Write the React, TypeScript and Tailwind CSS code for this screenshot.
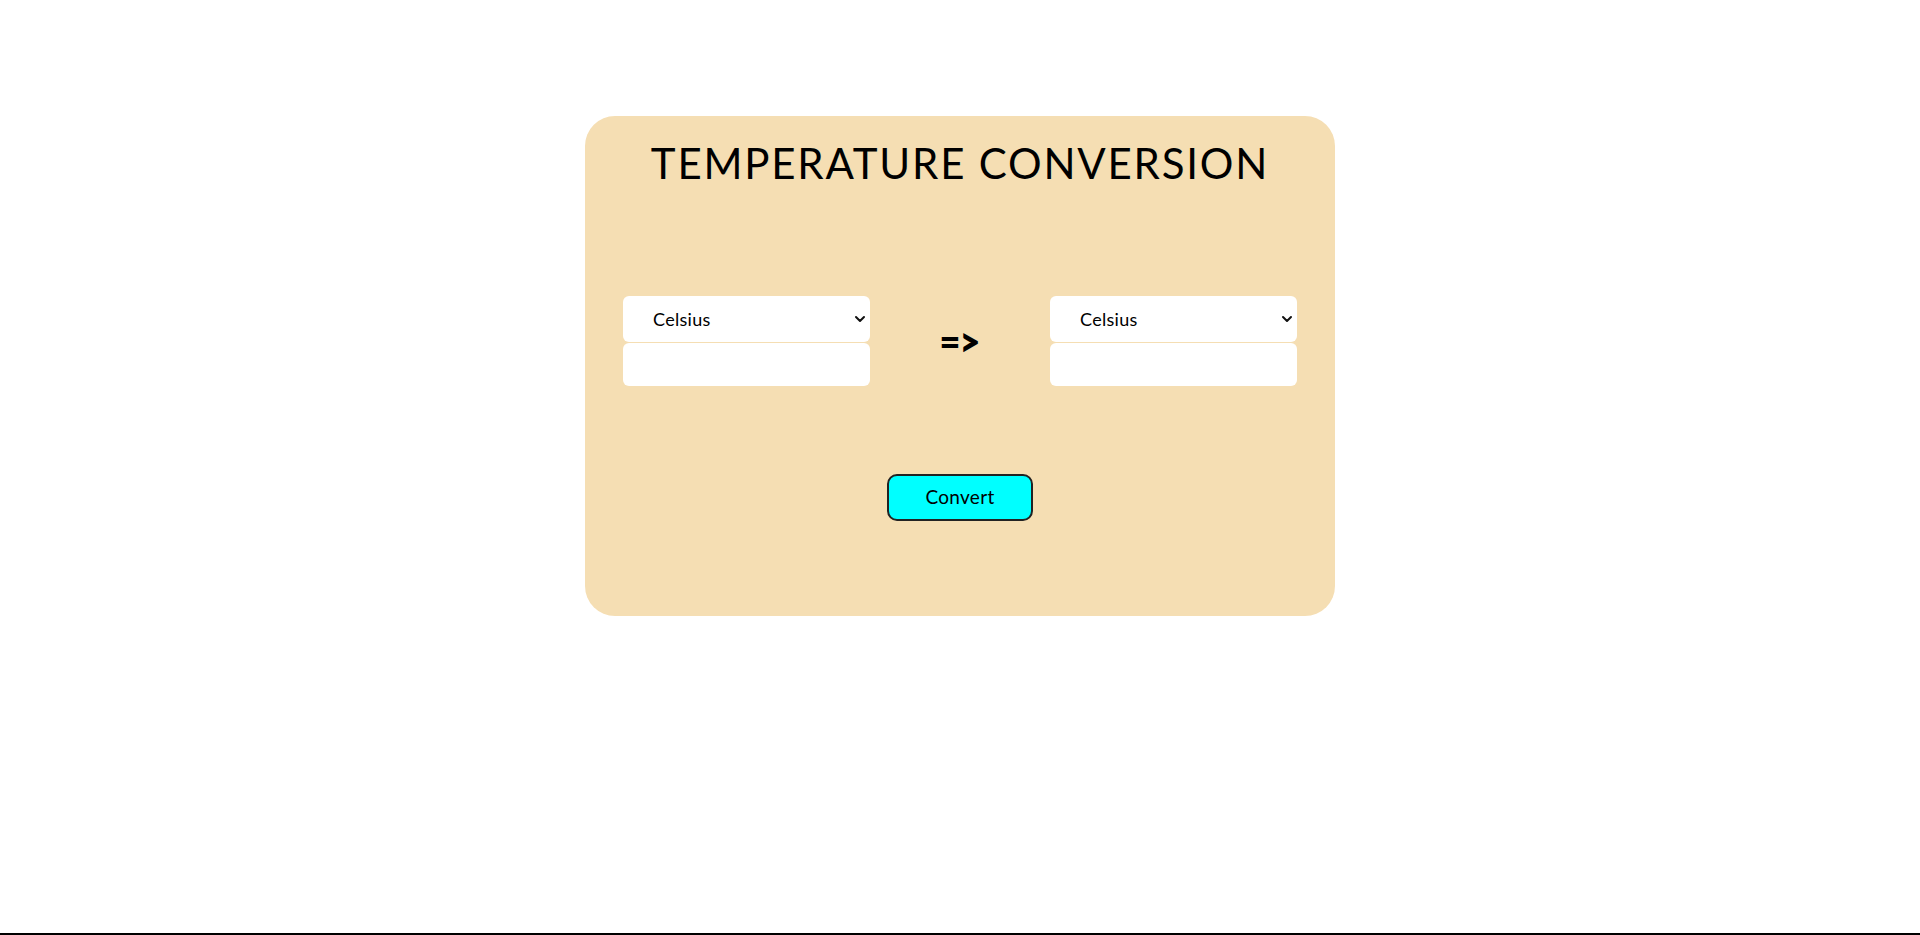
import React from "react";

function Chevron() {
  return (
    <svg
      className="pointer-events-none absolute right-[4px] top-[17px]"
      width="12"
      height="12"
      viewBox="0 0 12 12"
      fill="none"
    >
      <path d="M2 4 L6 8 L10 4" stroke="#111" strokeWidth="2" strokeLinecap="round" strokeLinejoin="round" />
    </svg>
  );
}

function Side() {
  return (
    <div className="flex w-[247px] flex-col gap-[1px]">
      <div className="relative">
        <select
          defaultValue="Celsius"
          className="h-[46px] w-full appearance-none rounded-[6px] border-0 bg-white pl-[30px] text-[18px] tracking-[0.3px] text-black outline-none"
        >
          <option>Celsius</option>
          <option>Fahrenheit</option>
          <option>Kelvin</option>
        </select>
        <Chevron />
      </div>
      <input className="h-[43px] w-full rounded-[6px] border-0 bg-white px-3 text-[17px] outline-none" />
    </div>
  );
}

export default function App() {
  return (
    <div
      className="flex h-[935px] flex-col bg-white"
      style={{ fontFamily: "Lato, 'Noto Sans', sans-serif" }}
    >
      <div className="flex flex-1 justify-center pt-[116px]">
        <div className="flex h-[500px] w-[750px] flex-col items-center rounded-[30px] bg-[#F5DEB3]">
          <h1 className="mt-[17px] text-[42px] font-normal leading-[60px] tracking-[1.8px] text-black">
            TEMPERATURE CONVERSION
          </h1>
          <div className="mt-[103px] flex w-full items-center justify-between px-[38px]">
            <Side />
            <div className="flex items-center text-[36px] font-extrabold leading-none text-black">
              <span>=</span>
              <span className="-ml-[1px] scale-y-110">&gt;</span>
            </div>
            <Side />
          </div>
          <button className="mt-[88px] h-[47px] w-[146px] rounded-[10px] border-2 border-[#222] bg-[#00FFFF] text-[19px] tracking-[0.3px] text-black">
            Convert
          </button>
        </div>
      </div>
      <div className="h-[2px] w-full bg-black" />
    </div>
  );
}
